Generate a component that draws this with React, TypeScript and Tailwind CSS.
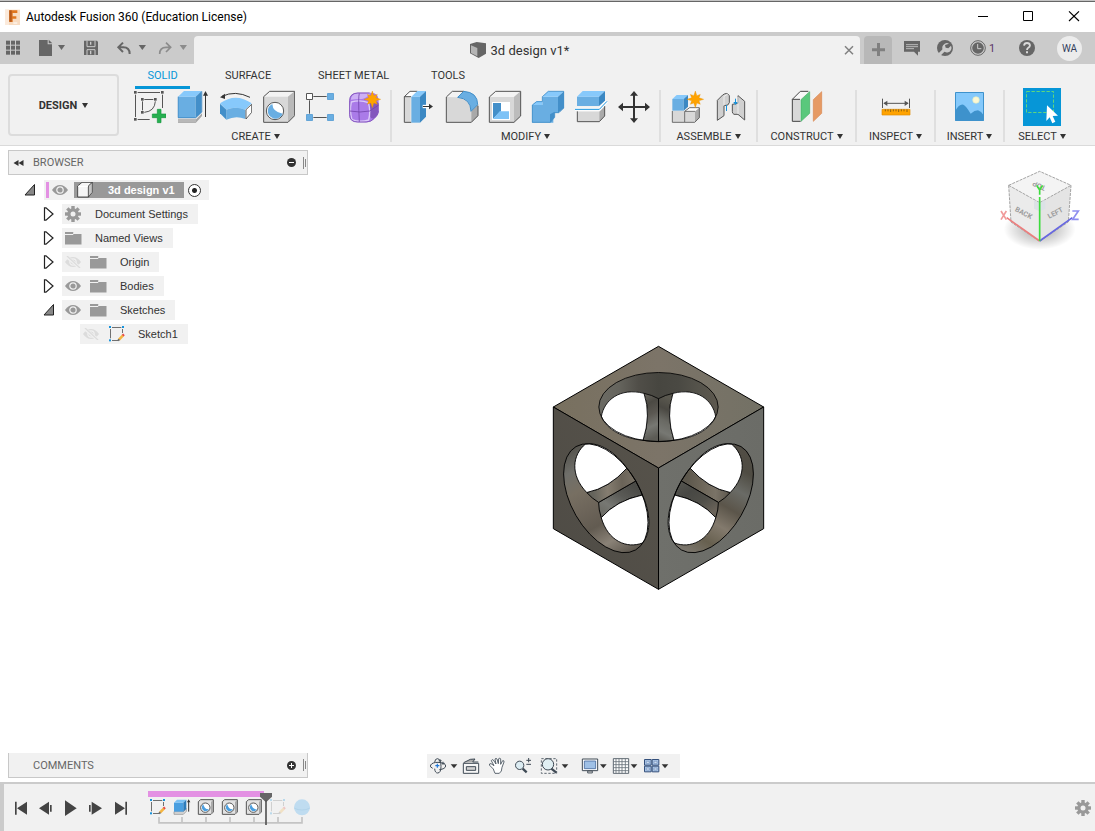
import React from "react";

type Box = { x: number; y: number; w: number; h: number; children: React.ReactNode; className?: string };

/* Artwork is drawn on a grid three times finer than its displayed size. */
function Art({ x, y, w, h, children, className = "" }: Box) {
  return (
    <svg
      aria-hidden="true"
      width={w}
      height={h}
      viewBox={`${x} ${y} ${w * 3} ${h * 3}`}
      className={"block shrink-0 " + className}
      fill="none"
    >
      {children}
    </svg>
  );
}

function IconButton({ label, children, className = "" }: { label: string; children: React.ReactNode; className?: string }) {
  return (
    <button type="button" aria-label={label} title={label} className={"block shrink-0 " + className}>
      {children}
    </button>
  );
}

function Caret() {
  return (
    <svg aria-hidden="true" width="6" height="5" viewBox="0 0 6 5" className="mb-[2px] block shrink-0">
      <path d="M0 0h6L3 5z" fill="#333" />
    </svg>
  );
}

/* ---------- title bar ---------- */

function TitleBar() {
  return (
    <header className="shrink-0 bg-white">
      <div className="h-[2px] border-b border-[#666] bg-[#c4c4c4]" />
      <div className="flex h-[30px] items-center justify-between">
        <div className="flex items-center gap-[6px] pl-[5px]">
          <Art x={15} y={24} w={15} h={16}>
            <path d="M15 26h46v46H15z" fill="#f8dcc2" />
            <path d="M15 26h12v46H15z" fill="#fbeadb" />
            <path d="M28 28h24v8H38v10h11v7H38v10H28z" fill="#e0761f" />
            <path d="M28 28h7v34h-7z" fill="#b5581a" />
            <path d="M40 66h12" stroke="#fff" strokeWidth="3" />
          </Art>
          <h1 className="font-[Roboto,sans-serif] text-[12px] leading-[16px] whitespace-nowrap text-black">
            Autodesk Fusion 360 (Education License)
          </h1>
        </div>
        <div className="flex">
          <IconButton label="Minimize">
            <Art x={300} y={6} w={46} h={30}>
              <path d="M354 49.500h30" stroke="#000" strokeWidth="3" />
            </Art>
          </IconButton>
          <IconButton label="Maximize">
            <Art x={438} y={6} w={45} h={30}>
              <path d="M490.500 34.500h27v27h-27z" stroke="#000" strokeWidth="3" />
            </Art>
          </IconButton>
          <IconButton label="Close">
            <Art x={573} y={6} w={44} h={30}>
              <path d="M627 34l30 29M657 34l-30 29" stroke="#000" strokeWidth="3.500" />
            </Art>
          </IconButton>
        </div>
      </div>
    </header>
  );
}

/* ---------- quick access and document tab ---------- */

function DocumentBar() {
  const dark = "#666";
  return (
    <div className="flex h-[32px] shrink-0 bg-[#cbcbcb]">
      <div className="flex">
        <IconButton label="Show data panel">
          <Art x={0} y={96} w={28} h={32}>
            {[18, 33, 48].map((gx) =>
              [122, 137, 152].map((gy) => <rect key={`${gx}-${gy}`} x={gx} y={gy} width="12" height="12" fill={dark} />)
            )}
          </Art>
        </IconButton>
        <IconButton label="File">
          <Art x={84} y={96} w={44} h={32}>
            <path d="M117 120h26v13h13v35h-39z" fill={dark} />
            <path d="M146 119l11 11h-11z" fill={dark} />
            <path d="M174 135h21l-10.500 15z" fill={dark} />
          </Art>
        </IconButton>
        <IconButton label="Save">
          <Art x={216} y={96} w={36} h={32}>
            <path d="M252 122h39l3 3v40h-42z" fill={dark} />
            <path d="M261 122v18h24v-18M261 165v-16h24v16" stroke="#cbcbcb" strokeWidth="3" />
            <path d="M272 125v9M272 152v11" stroke="#cbcbcb" strokeWidth="4" />
          </Art>
        </IconButton>
        <IconButton label="Undo">
          <Art x={324} y={96} w={44} h={32}>
            <path d="M369 128l-14 14 14 14M356 142h14q19 0 19 20" stroke={dark} strokeWidth="6" />
            <path d="M416 135h22l-11 15z" fill={dark} />
          </Art>
        </IconButton>
        <IconButton label="Redo">
          <Art x={456} y={96} w={42} h={32}>
            <path d="M498 128l14 14-14 14M512 142h-14q-19 0-19 20" stroke="#8c8c8c" strokeWidth="5" />
            <path d="M539 135h22l-11 15z" fill="#8c8c8c" />
          </Art>
        </IconButton>
      </div>
      <div className="flex flex-1 pt-[4px]">
        <div className="flex flex-1 items-center rounded-t-[4px] bg-[#f1f1f1] pr-[6px]">
          <div className="flex flex-1 items-center justify-center gap-[4px]">
            <Art x={123} y={123} w={18} h={18}>
              <path d="M126 132l20-6 28 4v31l-22 13-26-14z" fill="#666" />
              <path d="M129 136l19 8v25l-19-10z" fill="#b5b5b5" />
            </Art>
            <span className="pt-[2px] font-[Roboto,sans-serif] text-[13px] leading-[16px] text-[#333]">3d design v1*</span>
          </div>
          <IconButton label="Close document">
            <Art x={1242} y={135} w={10} h={10}>
              <path d="M1245 139l24 24M1269 139l-24 24" stroke="#808080" strokeWidth="4.500" />
            </Art>
          </IconButton>
        </div>
        <IconButton label="New design" className="ml-[4px] rounded-t-[4px] bg-[#b8b8b8]">
          <Art x={12} y={108} w={28} h={28}>
            <path d="M36 149h39M55.500 129v39" stroke="#808080" strokeWidth="9" />
          </Art>
        </IconButton>
      </div>
      <div className="flex w-[203px] items-center">
        <IconButton label="Comments">
          <Art x={96} y={96} w={36} h={32}>
            <path d="M132 123h48v32h-6v12l-12-12h-30z" fill={dark} />
            <path d="M138 134h36M138 140h36M138 146h24" stroke="#cbcbcb" strokeWidth="2.500" />
          </Art>
        </IconButton>
        <IconButton label="Extensions">
          <Art x={204} y={96} w={33} h={32}>
            <circle cx="255" cy="144" r="24" fill={dark} />
            <path d="M236 166l17-17" stroke="#cbcbcb" strokeWidth="9" />
            <path d="M267 131a14 14 0 1 0 6 6l-8 8-8-2-2-8z" fill="#cbcbcb" />
          </Art>
        </IconButton>
        <button type="button" aria-label="Job status: 1" className="flex w-[44px] items-center">
          <Art x={303} y={96} w={28} h={32}>
            <circle cx="354" cy="144" r="22" stroke={dark} strokeWidth="3" />
            <circle cx="354" cy="144" r="17.500" fill={dark} />
            <path d="M353 132v14h11" stroke="#cbcbcb" strokeWidth="3" />
          </Art>
          <span className="pt-[2px] font-[Roboto,sans-serif] text-[11px] leading-[16px] text-[#5a3768]">1</span>
        </button>
        <IconButton label="Help">
          <Art x={435} y={96} w={44} h={32}>
            <circle cx="501" cy="144" r="24" fill={dark} />
            <path d="M492 137q1-8 9-8t9 7q0 5-6 8-3 2-3 6" stroke="#dadada" strokeWidth="5.500" />
            <path d="M498 154h6v6h-6z" fill="#dadada" />
          </Art>
        </IconButton>
        <button
          type="button"
          aria-label="Account"
          className="ml-[8px] h-[25px] w-[25px] shrink-0 rounded-full bg-[#ececec] text-center font-[Roboto,sans-serif] text-[10px] leading-[25px] text-[#333f5c]"
        >
          WA
        </button>
      </div>
    </div>
  );
}

/* ---------- ribbon ---------- */

function Spark({ cx, cy }: { cx: number; cy: number }) {
  const pts = Array.from({ length: 16 }, (_, i) => {
    const r = i % 2 ? 12 : i % 4 === 0 ? 25 : 21;
    const a = (i * Math.PI) / 8;
    return `${cx + r * Math.sin(a)},${cy - r * Math.cos(a)}`;
  }).join(" ");
  return <polygon points={pts} fill="#ffa300" stroke="#e08d00" strokeWidth="1" />;
}

function Sq({ x, y, s = 8, f = "#555" }: { x: number; y: number; s?: number; f?: string }) {
  return <rect x={x - s / 2} y={y - s / 2} width={s} height={s} fill={f} />;
}

const createTools: [string, number, React.ReactNode][] = [
  ["Create Sketch", 30, (
    <>
      <path d="M53 97.500h67M46.500 104v67M127.500 104v40M53 178.500h36" stroke="#555" strokeWidth="3" />
      <path d="M73 118.500h27M67.500 124v27M106 124q-2 30-33 33" stroke="#555" strokeWidth="3" />
      <Sq x={46} y={97} /><Sq x={127} y={97} /><Sq x={46} y={178} />
      <Sq x={67} y={118} /><Sq x={106} y={118} /><Sq x={67} y={157} />
      <path d="M112 148h11v14h15v11h-15v15h-11v-15H97v-11h15z" fill="#26b050" stroke="#14963c" strokeWidth="2" />
    </>
  )],
  ["Extrude", 159, (
    <>
      <path d="M174 179h53l19-19v8l-19 21h-53z" fill="#a6a6a6" />
      <path d="M174 176h54v12h-54z" fill="#b8b8b8" />
      <path d="M174 110h53v64h-53z" fill="#69aee2" />
      <path d="M174 110l18-17h53l-18 17z" fill="#87c9fb" />
      <path d="M227 110l18-17v64l-18 17z" fill="#438fc9" />
      <path d="M174.500 110v63h53l18-17V94" stroke="#3784c0" strokeWidth="2" />
      <path d="M256.500 171V100" stroke="#333" strokeWidth="3" />
      <path d="M249 107h15l-7.500-14z" fill="#333" />
    </>
  )],
  ["Revolve", 288, (
    <>
      <path d="M306 109q40-19 84 3" stroke="#333" strokeWidth="3" />
      <path d="M300 112l15-11v16z" fill="#333" />
      <path d="M300 130q47-34 95 0l-20 19q-28-12-56 0z" fill="#87c9fb" />
      <path d="M319 149q28-12 57 0v28q-28-12-57 2z" fill="#69aee2" />
      <path d="M300 131l19 18v30l-19-19z" fill="#438fc9" />
      <path d="M378 149l17-16v24l-17 20z" fill="#fff" stroke="#444" strokeWidth="2.500" />
    </>
  )],
  ["Hole", 417, (
    <>
      <path d="M431 110l18-16h75v73l-20 20h-73z" fill="#d8d8d8" />
      <path d="M431 110l18-16h75l-20 16z" fill="#f3f3f3" />
      <path d="M504 110l20-16v73l-20 20z" fill="#b9b9b9" />
      <path d="M431 110l18-16h75v73l-20 20h-73z" stroke="#555" strokeWidth="3" />
      <circle cx="465" cy="153" r="26" fill="#fff" stroke="#555" strokeWidth="3" />
      <path d="M457 132q1 24 31 29a23 23 0 1 1-31-29z" fill="#69aee2" />
    </>
  )],
  ["Rectangular Pattern", 546, (
    <>
      <path d="M580 109.500h40M580 172.500h40M568.500 121v40" stroke="#555" strokeWidth="3" />
      <path d="M559.500 100.500h18v18h-18z" fill="#fff" stroke="#555" strokeWidth="3" />
      <path d="M622.500 100.500h18v18h-18zM622.500 163.500h18v18h-18zM559.500 163.500h18v18h-18z" fill="#69aee2" stroke="#3f8fcd" strokeWidth="2" />
    </>
  )],
  ["Create Form", 675, (
    <>
      <path d="M688 122q0-23 24-24h40q24 0 24 24v31q0 12-12 22-10 12-25 12h-27q-24 0-24-22z" fill="#aa7be8" />
      <path d="M692 119q4-19 22-19h38q-10 14-26 17-22 0-34 2z" fill="#cdb0f5" />
      <path d="M749 122q22 0 27 8v23q0 12-14 22-13 5-13-20z" fill="#8457bd" />
      <path d="M694 126q26-8 51 2 8 26 1 52-26 8-50-1-8-26-2-53z" stroke="#dccaf8" strokeWidth="4" />
      <path d="M689 153q32 6 60 0l27-18M718 100q-4 9 0 86" stroke="#7344ad" strokeWidth="2.500" />
      <path d="M689 122q0-22 24-23h36M689 122v42q0 22 24 22h26q14 0 24-11 12-10 12-22" stroke="#8659bf" strokeWidth="3" />
      <Spark cx={757} cy={118} />
    </>
  )],
];

const modifyTools: [string, number, React.ReactNode][] = [
  ["Press Pull", 30, (
    <>
      <path d="M43 110h19v77H43z" fill="#d8d8d8" />
      <path d="M43 110l17-16h25l-19 16z" fill="#fff" />
      <path d="M64 187H43v-77l17-16h22M43 110h20" stroke="#555" strokeWidth="3" />
      <path d="M64 110h26v78H64z" fill="#69aee2" />
      <path d="M64 110l18-17h26l-18 17z" fill="#87c9fb" />
      <path d="M90 110l18-17v77l-18 18z" fill="#3b88c3" />
      <path d="M98 139.500h22" stroke="#fff" strokeWidth="10" />
      <path d="M99 139.500h22" stroke="#333" strokeWidth="3" />
      <path d="M117 131v17l12-8.500z" fill="#333" />
    </>
  )],
  ["Fillet", 159, (
    <>
      <path d="M169 111h34q41 3 42 43v33h-76z" fill="#d8d8d8" />
      <path d="M169 111l18-17h34l-18 18z" fill="#f3f3f3" />
      <path d="M244 153l20-20v35l-20 19z" fill="#a9a9a9" />
      <path d="M222 94h-35l-18 17v76h75l20-20v-30" stroke="#555" strokeWidth="3" />
      <path d="M203 112l18-18q42 3 42 40l-20 20q-1-38-40-42z" fill="#69aee2" stroke="#438fc9" strokeWidth="3" />
    </>
  )],
  ["Shell", 288, (
    <>
      <path d="M298 111l19-17h75v74l-20 19h-74z" fill="#d8d8d8" />
      <path d="M298 111l19-17h75l-20 17z" fill="#f3f3f3" />
      <path d="M372 111l20-17v74l-20 19z" fill="#bcbcbc" />
      <path d="M298 111l19-17h75v74l-20 19h-74z" stroke="#555" strokeWidth="3" />
      <path d="M306 126h54v54h-54z" fill="#fff" />
      <path d="M309 129h24v25l-24 22z" fill="#438fc9" />
      <path d="M309 177l20-23h28v23z" fill="#7dc2f6" />
    </>
  )],
  ["Combine", 417, (
    <>
      <path d="M426 135h31v-25h47v49h-14v29h-64z" fill="#69aee2" />
      <path d="M457 110l17-16h48l-18 16zM426 135l14-12h17v12z" fill="#87c9fb" />
      <path d="M504 110l18-16v50l-18 15zM480 163l14-8v17l-14 16z" fill="#438fc9" />
      <path d="M427 135v52h54l13-15v-14h13l14-14V94h-46l-18 16v15h-17z" stroke="#438fc9" strokeWidth="2.500" />
    </>
  )],
  ["Split Body", 546, (
    <>
      <path d="M561 110h66v28h-66z" fill="#69aee2" />
      <path d="M561 110l17-17h67l-18 17z" fill="#87c9fb" />
      <path d="M627 110l18-17v29l-18 16z" fill="#3b88c3" />
      <path d="M562 155h66v30h-66z" fill="#d8d8d8" />
      <path d="M628 155l16-16v29l-16 17z" fill="#aaa" />
      <path d="M562 154v31h66l16-17v-30" stroke="#555" strokeWidth="3" />
      <path d="M555 148h73l23-24" stroke="#fff" strokeWidth="9" />
      <path d="M555 148h73l23-24" stroke="#1893dc" strokeWidth="3" />
    </>
  )],
  ["Move/Copy", 675, (
    <>
      <path d="M732 104v74M697 141h70" stroke="#333" strokeWidth="6" />
      <path d="M720 107h24l-12-14zM720 175h24l-12 14zM699 128v26l-15-13zM765 128v26l15-13z" fill="#333" />
    </>
  )],
];

const assembleTools: [string, number, React.ReactNode][] = [
  ["New Component", 42, (
    <>
      <path d="M52 152h36v35H52zM90 152h30v35H90z" fill="#d8d8d8" />
      <path d="M90 152l13-9h31l-14 12z" fill="#fff" />
      <path d="M120 154l14-11v30l-14 14z" fill="#aaa" />
      <path d="M52 153v34h67l14-14v-30h-29l-15 11v32M90 154h30" stroke="#555" strokeWidth="2.500" />
      <path d="M52 117h34v35H52z" fill="#69aee2" />
      <path d="M52 117l13-12h34l-13 12z" fill="#87c9fb" />
      <path d="M86 117l13-12v35l-13 12z" fill="#3b88c3" />
      <Spark cx={121} cy={118} />
    </>
  )],
  ["Joint", 171, (
    <>
      <path d="M187 121l16-16q14-10 20 2v21q-2 10-16 9v30l-20 14z" fill="#d0d0d0" stroke="#555" strokeWidth="3" />
      <path d="M207 109v28M207 109l15-9" stroke="#fff" strokeWidth="2" />
      <path d="M249 107l20 17v56l-20-17h-12q-6-3-5-9v-21l17-3z" fill="#d0d0d0" stroke="#555" strokeWidth="3" />
      <path d="M249 110v52" stroke="#eee" strokeWidth="3" />
      <path d="M214.500 135v18M241.500 116v14" stroke="#1893dc" strokeWidth="3" />
      <path d="M235 126h13l-6.500 9z" fill="#1893dc" />
    </>
  )],
];

const constructTools: [string, number, React.ReactNode][] = [
  ["Offset Plane", 399, (
    <>
      <path d="M412 118h23v66h-23z" fill="#d8d8d8" />
      <path d="M412 118l24-24h26l-26 24z" fill="#f8f8f8" />
      <path d="M437 184h-25v-66l24-24h24M412 118h23" stroke="#444" strokeWidth="3" />
      <path d="M438 119l26-24v65l-26 24z" fill="#5ac87c" stroke="#41ad64" strokeWidth="2" />
      <path d="M475 119l25-24v65l-25 24z" fill="#e69a64" stroke="#d98750" strokeWidth="2" />
    </>
  )],
];

function Group({
  title, tools, y = 90, slot = 36, width, children,
}: { title: string; tools?: [string, number, React.ReactNode][]; y?: number; slot?: number; width: string; children?: React.ReactNode }) {
  return (
    <section className={"flex h-[52px] shrink-0 flex-col border-r-2 border-[#dfdfdf] last:border-r-0 " + width}>
      <div className="flex h-[34px] items-center justify-center gap-[7px]">
        {tools?.map(([label, x, art]) => (
          <IconButton key={label} label={label}>
            <Art x={x} y={y} w={slot} h={34}>{art}</Art>
          </IconButton>
        ))}
        {children}
      </div>
      <button type="button" className="mt-[5px] flex items-center justify-center gap-[3px] font-[Roboto,sans-serif] text-[11px] leading-[16px] text-[#333]">
        {title}
        <Caret />
      </button>
    </section>
  );
}

function Ribbon() {
  return (
    <div className="flex h-[82px] shrink-0 border-b border-[#dadada] bg-[#f1f1f1] pl-[8px]">
      <button
        type="button"
        className="mt-[10px] flex h-[62px] w-[111px] shrink-0 items-center justify-center gap-[5px] rounded-[4px] border-2 border-[#dcdcdc] pt-[2px] font-[Roboto,sans-serif] text-[11px] font-bold text-[#333]"
      >
        DESIGN
        <Caret />
      </button>
      <div className="ml-[2px] flex-1">
        <nav className="flex h-[26px] pl-[14px] font-[Roboto,sans-serif] text-[11px] leading-[23px] text-[#333]">
          <a href="#solid" aria-current="page" className="mr-[35px] h-[25px] w-[55px] border-b-[3px] border-[#0696d7] text-center text-[#0696d7]">SOLID</a>
          <a href="#surface" className="w-[93px]">SURFACE</a>
          <a href="#sheet-metal" className="w-[113px]">SHEET METAL</a>
          <a href="#tools">TOOLS</a>
        </nav>
        <div className="flex">
          <Group title="CREATE" tools={createTools} width="w-[271px]" />
          <Group title="MODIFY" tools={modifyTools} width="w-[269px]" />
          <Group title="ASSEMBLE" tools={assembleTools} width="w-[97px]" />
          <Group title="CONSTRUCT" tools={constructTools} slot={37} width="w-[99px]" />
          <Group
            title="INSPECT"
            y={270}
            slot={37}
            width="w-[79px]"
            tools={[["Measure", 51, (
              <>
                <path d="M67.500 296v28M148.500 296v28M72 310h72" stroke="#555" strokeWidth="3" />
                <path d="M70 310l12-8v16zM146 310l-12-8v16z" fill="#555" />
                <path d="M66 328h84v17H66z" fill="#ffa300" stroke="#e08d00" strokeWidth="2" />
                <path d="M76 328v6M84 328v6M92 328v8M100 328v6M108 328v6M116 328v8M124 328v6M132 328v6M141 328v8" stroke="#7a5410" strokeWidth="2.500" />
              </>
            )]]}
          />
          <Group
            title="INSERT"
            y={270}
            slot={37}
            width="w-[69px]"
            tools={[["Insert Decal", 273, (
              <>
                <path d="M286 277h85v85h-85z" fill="#85c9fb" />
                <path d="M286 332q12-21 24-18 8 3 22 27 12-10 22-10 10 3 17 15v16h-85z" fill="#3e92cc" />
                <circle cx="348" cy="300" r="10" fill="#fdf8d2" stroke="#d9e9c5" strokeWidth="2" />
                <path d="M286.500 277.500h84v84h-84z" stroke="#3e92cc" strokeWidth="3" />
              </>
            )]]}
          />
          <Group title="SELECT" width="w-[74px]">
            <IconButton label="Select" className="-my-[2px] bg-[#0696d7]">
              <Art x={489} y={264} w={38} h={38}>
                <path d="M499.500 274.500h81v63h-81z" stroke="#60d67c" strokeWidth="3" strokeDasharray="10 5" />
                <path d="M561 316l33 31-16 1 8 17-9 5-8-18-10 11z" fill="#fff" />
              </Art>
            </IconButton>
          </Group>
        </div>
      </div>
    </div>
  );
}

/* ---------- browser tree ---------- */

function Twisty({ open }: { open?: boolean }) {
  return (
    <svg aria-hidden="true" width="12" height="14" viewBox="0 0 12 14" className="block">
      {open ? (
        <path d="M10.500 1.500v10.500H1z" fill="#888" stroke="#222" />
      ) : (
        <path d="M1.500.8v12.400h1.500l7-6.200-7-6.200z" fill="#fff" stroke="#222" strokeWidth="1.200" />
      )}
    </svg>
  );
}

function Eye({ off }: { off?: boolean }) {
  const c = off ? "#dcdcdc" : "#999";
  return (
    <svg aria-hidden="true" width="16" height="12" viewBox="0 0 16 12" className="block">
      <path d="M0 6q3.500-5 8-5t8 5q-3.500 5-8 5T0 6z" fill={c} />
      <circle cx="8" cy="6" r="3.200" fill="none" stroke="#f1f1f1" strokeWidth="1.200" />
      {off && <path d="M1 0l14 12" stroke="#f1f1f1" strokeWidth="3" />}
      {off && <path d="M2 0l13 12" stroke={c} strokeWidth="1.300" />}
    </svg>
  );
}

function Folder() {
  return (
    <svg aria-hidden="true" width="17" height="14" viewBox="0 0 17 14" className="block">
      <path d="M0 1h8l1 2h7.500v10.500H0z" fill="#999" />
      <path d="M0 3.500h8l1-1.500" stroke="#f1f1f1" fill="none" />
    </svg>
  );
}

function Gear() {
  return (
    <svg aria-hidden="true" width="16" height="16" viewBox="-8 -8 16 16" className="block">
      {[0, 45, 90, 135].map((a) => (
        <rect key={a} x="-1.700" y="-8" width="3.400" height="16" fill="#999" transform={`rotate(${a})`} />
      ))}
      <circle r="5.700" fill="#999" />
      <circle r="2.500" fill="#f1f1f1" />
    </svg>
  );
}

function SketchGlyph() {
  return (
    <Art x={447} y={159} w={18} h={18}>
      <path d="M459 166.500h28M454.500 171v28M490.500 171v12M459 205.500h18" stroke="#555" strokeWidth="2.500" />
      <Sq x={453} y={165} s={6} f="#1893dc" /><Sq x={492} y={165} s={6} f="#1893dc" /><Sq x={453} y={205} s={6} f="#1893dc" />
      <path d="M480 203l12-13" stroke="#f4b541" strokeWidth="8" />
      <path d="M477 206l4-4" stroke="#666" strokeWidth="6" />
      <path d="M491 191l4-4" stroke="#e84a4a" strokeWidth="7" />
    </Art>
  );
}

type TreeNode = { name: string; pad: string; open?: boolean; leaf?: boolean; eye?: "on" | "off"; icon: React.ReactNode };

const nodes: TreeNode[] = [
  { name: "Document Settings", pad: "pl-[35px]", icon: <Gear /> },
  { name: "Named Views", pad: "pl-[35px]", icon: <Folder /> },
  { name: "Origin", pad: "pl-[35px]", eye: "off", icon: <Folder /> },
  { name: "Bodies", pad: "pl-[35px]", eye: "on", icon: <Folder /> },
  { name: "Sketches", pad: "pl-[35px]", eye: "on", open: true, icon: <Folder /> },
  { name: "Sketch1", pad: "pl-[72px]", leaf: true, eye: "off", icon: <SketchGlyph /> },
];

function Grip() {
  return (
    <svg aria-hidden="true" width="4" height="12" viewBox="0 0 4 12" className="block">
      <path d="M.500 0v12M2.500 2v8" stroke="#888" />
    </svg>
  );
}

function Browser() {
  return (
    <aside className="relative w-[300px]">
      <div className="flex h-[25px] items-center border border-[#c8c8c8] bg-[#f1f1f1] pl-[3px]">
        <IconButton label="Collapse browser">
          <svg width="14" height="8" viewBox="0 0 14 8" className="block"><path d="M6.500 1v6L1.500 4zM11.500 1v6L6.500 4z" fill="#333" /></svg>
        </IconButton>
        <h2 className="ml-[7px] flex-1 font-[Roboto,sans-serif] text-[11px] leading-[16px] text-[#666]">BROWSER</h2>
        <IconButton label="Minimize browser" className="mr-[7px]">
          <svg width="9" height="9" viewBox="0 0 9 9" className="block"><circle cx="4.500" cy="4.500" r="4.500" fill="#333" /><path d="M2 4.500h5" stroke="#fff" /></svg>
        </IconButton>
        <Grip />
      </div>
      <ul className="mt-[3px] font-['Liberation_Sans',Arial,sans-serif] text-[11px] leading-[20px] text-[#333]">
        <li className="flex h-[24px] items-center pl-[16px]">
          <IconButton label="Collapse 3d design v1" className="mr-[8px]"><Twisty open /></IconButton>
          <div className="flex h-[20px] items-center bg-[#f1f1f1] pr-[8px] pl-[2px]">
            <span className="h-[16px] w-[3px] bg-[#e391e3]" />
            <IconButton label="Toggle visibility" className="mx-[3px]"><Eye /></IconButton>
            <div className="ml-[3px] flex h-[16px] items-center bg-[#999] pr-[9px] pl-[3px] font-bold text-white">
              <Art x={231} y={112} w={17} h={16}>
                <path d="M233 124l13-11h31l-11 11v33h-33z" fill="#f5f5f5" stroke="#333" strokeWidth="2.500" />
                <path d="M265 124l12-11v30l-12 14z" fill="#c5c5c5" stroke="#333" strokeWidth="2" />
                <path d="M234 125h30" stroke="#fff" strokeWidth="3" />
              </Art>
              <span className="ml-[14px]">3d design v1</span>
            </div>
            <input
              type="radio"
              name="active-component"
              aria-label="Activate 3d design v1"
              defaultChecked
              className="ml-[4px] h-[13px] w-[13px] appearance-none rounded-full border border-[#333] bg-[radial-gradient(circle,#222_0_2px,#fff_3px)]"
            />
          </div>
        </li>
        {nodes.map((n) => (
          <li key={n.name} className={"flex h-[24px] items-center " + n.pad}>
            {!n.leaf && (
              <IconButton label={`Expand ${n.name}`} className="mr-[7px]"><Twisty open={n.open} /></IconButton>
            )}
            <div className="flex h-[20px] items-center bg-[#f1f1f1] pr-[10px] pl-[3px]">
              {n.eye && (
                <IconButton label="Toggle visibility" className="mr-[9px]"><Eye off={n.eye === "off"} /></IconButton>
              )}
              <span className="flex w-[17px]">{n.icon}</span>
              <span className="ml-[13px]">{n.name}</span>
            </div>
          </li>
        ))}
      </ul>
    </aside>
  );
}

/* ---------- model ---------- */

function Opening({ id, turn, wall, a, b }: { id: string; turn: number; wall: string[]; a: string[]; b: string[] }) {
  const stops = (c: string[]) => c.map((s, i) => <stop key={i} offset={i / (c.length - 1)} stopColor={s} />);
  return (
    <g transform={`rotate(${turn} 355.5 398.500)`} stroke="#000" strokeWidth="2.500" strokeLinejoin="round">
      <linearGradient id={`${id}w`}>{stops(wall)}</linearGradient>
      <linearGradient id={`${id}a`} x1="0" y1="0" x2="0.15" y2="1">{stops(a)}</linearGradient>
      <linearGradient id={`${id}b`} x1="0" y1="0" x2="-0.15" y2="1">{stops(b)}</linearGradient>
      <ellipse cx="355.500" cy="216" rx="179" ry="103.500" fill={`url(#${id}w)`} stroke="none" />
      <path d="M312 175Q336 180 355.500 191V320Q332 320 309 316Q334 240 312 175z" fill={`url(#${id}a)`} />
      <path d="M399 175Q375 180 355.500 191V320Q379 320 402 316Q377 240 399 175z" fill={`url(#${id}b)`} />
      <path d="M184 245C192 195 240 157 312 175Q334 240 309 316C250 310 200 284 184 245z" fill="#fff" />
      <path d="M527 245C519 195 471 157 399 175Q377 240 402 316C461 310 511 284 527 245z" fill="#fff" />
      <ellipse cx="355.500" cy="216" rx="179" ry="103.500" fill="none" />
    </g>
  );
}

function Model() {
  return (
    <svg role="img" aria-label="Hollow cube model" width="240" height="265" viewBox="0 0 720 795" className="absolute top-[189px] left-[540px]">
      <defs>
        <linearGradient id="top"><stop stopColor="#78705f" /><stop offset=".5" stopColor="#7c7468" /><stop offset="1" stopColor="#737165" /></linearGradient>
        <linearGradient id="left" x1="0" y1="1" x2="1" y2="0"><stop stopColor="#4e4b45" /><stop offset="1" stopColor="#57534b" /></linearGradient>
        <linearGradient id="right"><stop stopColor="#6f706b" /><stop offset="1" stopColor="#6b6c67" /></linearGradient>
      </defs>
      <g stroke="#000" strokeWidth="3" strokeLinejoin="round">
        <path d="M355.500 34L671 216 355.500 399 40 216z" fill="url(#top)" />
        <path d="M40 216l315.500 183v364L40 581z" fill="url(#left)" />
        <path d="M671 216L355.500 399v364L671 581z" fill="url(#right)" />
      </g>
      <Opening id="t" turn={0} wall={["#6c6b64", "#65645d", "#504e48", "#474640", "#4a4943", "#55534b", "#5d584e"]} a={["#6b6860", "#4b4943", "#5b5852", "#777873", "#5c5b55"]} b={["#5a584f", "#4a4842", "#696963", "#777873", "#55534c"]} />
      <Opening id="l" turn={-120} wall={["#5c564d", "#8a8277", "#625b51", "#6d655a", "#776f62", "#6f6f6a", "#55534d"]} a={["#686861", "#777873", "#5a5a56", "#4b4b47"]} b={["#65645c", "#857d70", "#6a6358", "#7a7367"]} />
      <Opening id="r" turn={120} wall={["#514d45", "#4f4c43", "#6a6b66", "#5b554a", "#837a6d", "#67604f", "#7d7870"]} a={["#5b564c", "#7a7367", "#6d6659", "#5c574c"]} b={["#6a6359", "#504f49", "#484844", "#565650"]} />
    </svg>
  );
}

function ViewCube() {
  return (
    <svg role="img" aria-label="View cube" width="110" height="100" viewBox="0 0 330 300" className="absolute top-[9px] right-0">
      <defs>
        <radialGradient id="shade"><stop offset=".4" stopColor="#000" stopOpacity=".22" /><stop offset="1" stopColor="#000" stopOpacity="0" /></radialGradient>
      </defs>
      <ellipse cx="164" cy="222" rx="108" ry="62" fill="url(#shade)" />
      <path d="M164 49l94 42-94 52-93-52z" fill="#f4f4f4" />
      <path d="M71 91l93 52v116l-86-58z" fill="#ebebeb" />
      <path d="M258 91l-94 52v116l86-58z" fill="#e4e4e4" />
      <path d="M71 91l93-42 94 42-8 110-86 58-86-58zM71 91l93 52 94-52" fill="none" stroke="#a3a3a3" strokeWidth="3" strokeDasharray="9 3" />
      <path d="M147 135l17 9 17-9v26l-17 8-17-8z" fill="#dce2e6" />
      <g fill="#9c9c9c" fontFamily="Roboto, sans-serif" fontSize="21" fontWeight="700" textAnchor="middle">
        <text x="116" y="181" transform="rotate(28 116 174)">BACK</text>
        <text x="211" y="181" transform="rotate(-28 211 174)">LEFT</text>
        <text x="162" y="101" transform="rotate(205 162 93)">TOP</text>
      </g>
      <g strokeWidth="5" fill="none">
        <path d="M65 188l99 70" stroke="#ec7d7d" />
        <path d="M262 188l-98 70" stroke="#6666e2" />
        <path d="M164 258V126M164 119v-19M164 105l-9-14M164 105l9-14" stroke="#3ddc3d" />
        <path d="M48 168l16 26M64 168l-16 26" stroke="#f19b9b" />
        <path d="M262 168h18l-17 25h18" stroke="#8e8ef0" />
      </g>
    </svg>
  );
}

/* ---------- navigation bar ---------- */

const ink = "#3f4a55";

const navTools: [string, number, number, React.ReactNode][] = [
  ["Orbit", 21, 32, (
    <>
      <path d="M44 52q1-11 8-11 11 1 11 23 0 20-10 20-8 0-9-13" stroke={ink} strokeWidth="3" />
      <path d="M38 70q-10-4-6-10 5-8 22-8 23 1 23 11-1 9-19 11" stroke={ink} strokeWidth="3" />
      <path d="M52 56v12M46 62h12" stroke="#2178d8" strokeWidth="3.500" />
      <path d="M60 42v10M56 47h9M69 50v10M65 55h9" stroke={ink} strokeWidth="2.500" />
      <path d="M92 58h20l-10 12z" fill="#333" />
    </>
  )],
  ["Look At", 117, 23, (
    <>
      <path d="M130 55h46v30h-46z" fill="#f6f6f6" stroke={ink} strokeWidth="3" />
      <path d="M139 65h28v11h-28z" fill="#d0d0d0" stroke={ink} strokeWidth="3" />
      <path d="M131 53l20-10 14-1-7 9h17" stroke={ink} strokeWidth="3" fill="#aaa" />
    </>
  )],
  ["Pan", 186, 30, (
    <path d="M220 72l-12-12q0-5 5-4l9 6-8-15q2-5 6-2l8 12-3-15q3-4 6 0l4 14 1-15q4-4 6 1l0 16 6-11q5-1 4 4l-6 16q0 13-8 18h-13q-3-7-5-13z" fill="#fff" stroke={ink} strokeWidth="2.500" />
  )],
  ["Zoom", 276, 25, (
    <>
      <path d="M308 71l12 11" stroke={ink} strokeWidth="7" />
      <circle cx="299" cy="61" r="12.500" fill="#dcecf2" stroke={ink} strokeWidth="3" />
      <path d="M326 39v13M319 46h14M319 58h14" stroke={ink} strokeWidth="3" />
    </>
  )],
  ["Fit", 351, 38, (
    <>
      <path d="M364 41h46v44h-46z" stroke={ink} strokeWidth="2.500" strokeDasharray="7 5" />
      <path d="M394 71l15 12" stroke={ink} strokeWidth="7" />
      <circle cx="384" cy="58" r="17" fill="#e0eff3" stroke={ink} strokeWidth="3" />
      <path d="M425 58h20l-10 12z" fill="#333" />
    </>
  )],
  ["Display Settings", 465, 34, (
    <>
      <path d="M487 42h46v35h-46z" fill="#fff" stroke={ink} strokeWidth="3" />
      <path d="M493 48h34v23h-34z" fill="#9fc0e6" stroke="#46699c" strokeWidth="2.500" />
      <path d="M503 78h14v6h-14z" fill="#ccc" stroke={ink} strokeWidth="2.500" />
      <path d="M540 58h20l-10 12z" fill="#333" />
    </>
  )],
  ["Grid and Snaps", 567, 30, (
    <>
      <path d="M580 41h46v44h-46z" fill="#fff" stroke={ink} strokeWidth="2.500" />
      <path d="M588 41v44M597 41v44M606 41v44M616 41v44M580 50h46M580 59h46M580 68h46M580 77h46" stroke="#68717a" strokeWidth="2.500" />
      <path d="M632 58h20l-10 12z" fill="#333" />
    </>
  )],
  ["Viewports", 657, 41, (
    <>
      <path d="M673.500 43.500h20v17h-20zM696.500 43.500h20v17h-20zM673.500 63.500h20v17h-20zM696.500 63.500h20v17h-20z" fill="#a9c3e3" stroke="#34507c" strokeWidth="3" />
      <path d="M679 49h9v6h-9zM702 49h9v6h-9zM679 69h9v6h-9zM702 69h9v6h-9z" stroke="#7393bf" strokeWidth="2" fill="#dbe8f5" />
      <path d="M725 58h20l-10 12z" fill="#333" />
    </>
  )],
];

function BottomBars() {
  return (
    <div className="relative flex items-end">
      <section className="flex h-[25px] w-[300px] items-center border border-t-0 border-[#c8c8c8] bg-[#f1f1f1] pl-[24px]">
        <h2 className="flex-1 pt-[2px] font-[Roboto,sans-serif] text-[11px] leading-[16px] text-[#666]">COMMENTS</h2>
        <IconButton label="Add comment" className="mr-[7px]">
          <svg width="9" height="9" viewBox="0 0 9 9" className="block"><circle cx="4.500" cy="4.500" r="4.500" fill="#333" /><path d="M2 4.500h5M4.500 2v5" stroke="#fff" /></svg>
        </IconButton>
        <Grip />
      </section>
      <div role="toolbar" aria-label="Navigation" className="ml-[119px] flex bg-[#f1f1f1]">
        {navTools.map(([label, x, w, art]) => (
          <IconButton key={label} label={label}>
            <Art x={x} y={27} w={w} h={24}>{art}</Art>
          </IconButton>
        ))}
      </div>
    </div>
  );
}

/* ---------- timeline ---------- */

const playTools: [string, number, React.ReactNode][] = [
  ["Go to start", 33, <path key="p" d="M45 170h5v39h-5zM81 170v39l-30-19.500z" fill="#444" />],
  ["Step back", 105, <path key="p" d="M147 170v39l-30-19.500zM150 180h5v20h-5z" fill="#444" />],
  ["Play", 177, <path key="p" d="M195 166v47l35-23.500z" fill="#444" />],
  ["Step forward", 252, <path key="p" d="M267 180h5v20h-5zM275 170v39l31-19.500z" fill="#444" />],
  ["Go to end", 327, <path key="p" d="M345 170v39l30-19.500zM376 170h5v39h-5z" fill="#444" />],
];

function ExtrudeGlyph() {
  return (
    <Art x={519} y={159} w={18} h={18}>
      <path d="M522 200h28l9-9v8l-9 9h-28z" fill="#d8d8d8" stroke="#888" strokeWidth="2" />
      <path d="M522 173h28v27h-28z" fill="#4a9fe0" />
      <path d="M522 173l9-9h28l-9 9z" fill="#7cc1f4" />
      <path d="M550 173l9-9v27l-9 9z" fill="#2d7cbb" />
      <path d="M566 200v-30" stroke="#333" strokeWidth="3" />
      <path d="M561 172h10l-5-9z" fill="#333" />
    </Art>
  );
}

function HoleGlyph() {
  return (
    <Art x={591} y={159} w={18} h={18}>
      <path d="M595 170l7-6h38v37l-7 7h-38z" fill="#e2e2e2" stroke="#555" strokeWidth="3" />
      <path d="M633 171l6-6v35l-6 7z" fill="#aaa" />
      <circle cx="616" cy="188" r="14" fill="#fff" stroke="#555" strokeWidth="3" />
      <path d="M610 178q3 16 17 15a11.500 11.500 0 1 1-17-15z" fill="#4a9fe0" />
    </Art>
  );
}

function Timeline() {
  const features: [string, React.ReactNode][] = [
    ["Sketch1", <SketchGlyph />],
    ["Extrude1", <ExtrudeGlyph />],
    ["Extrude2", <HoleGlyph />],
    ["Extrude3", <HoleGlyph />],
    ["Extrude4", <HoleGlyph />],
    ["Sketch2", <span className="block opacity-25"><SketchGlyph /></span>],
    ["Sphere1", (
      <Art x={879} y={159} w={18} h={18}>
        <circle cx="906" cy="187" r="24" fill="#bfdcf0" />
        <path d="M883 190q23 10 46 0" stroke="#a9cde6" strokeWidth="2" />
      </Art>
    )],
  ];
  return (
    <footer className="flex h-[49px] shrink-0 items-start border-t-2 border-l-4 border-[#cbcbcb] bg-[#f1f1f1]">
      <div className="flex pt-[12px] pl-[7px]">
        {playTools.map(([label, x, art], i) => (
          <IconButton key={label} label={label}>
            <Art x={x} y={153} w={i < 2 ? 24 : 25} h={24}>{art}</Art>
          </IconButton>
        ))}
      </div>
      <div className="relative ml-[14px] pt-[7px]">
        <div className="h-[6px] w-[116px] bg-[#e391e3]" />
        <div className="mt-[1px] flex gap-[6px] pl-[1px]">
          {features.map(([label, art]) => (
            <IconButton key={label} label={label}>{art}</IconButton>
          ))}
        </div>
        <Art x={444} y={216} w={160} h={10}>
          <path d="M477 219v17.500h429V219M546 219v17M618 219v17M690 219v17M762 219v17M834 219v17" stroke="#c4c4c4" strokeWidth="5" />
        </Art>
        <Art x={777} y={141} w={14} h={34} className="absolute top-[8px] left-[111px]">
          <path d="M780 144h36v11l-18 17-18-17z" fill="#666" />
          <path d="M798 165v75" stroke="#555" strokeWidth="5" />
        </Art>
      </div>
      <IconButton label="Timeline settings" className="mt-[16px] mr-[4px] ml-auto"><Gear /></IconButton>
    </footer>
  );
}

export default function App() {
  return (
    <div className="flex min-h-screen flex-col bg-white">
      <TitleBar />
      <DocumentBar />
      <Ribbon />
      <main className="relative flex flex-1 flex-col justify-between px-[8px] py-[4px]">
        <Model />
        <ViewCube />
        <Browser />
        <BottomBars />
      </main>
      <Timeline />
    </div>
  );
}
